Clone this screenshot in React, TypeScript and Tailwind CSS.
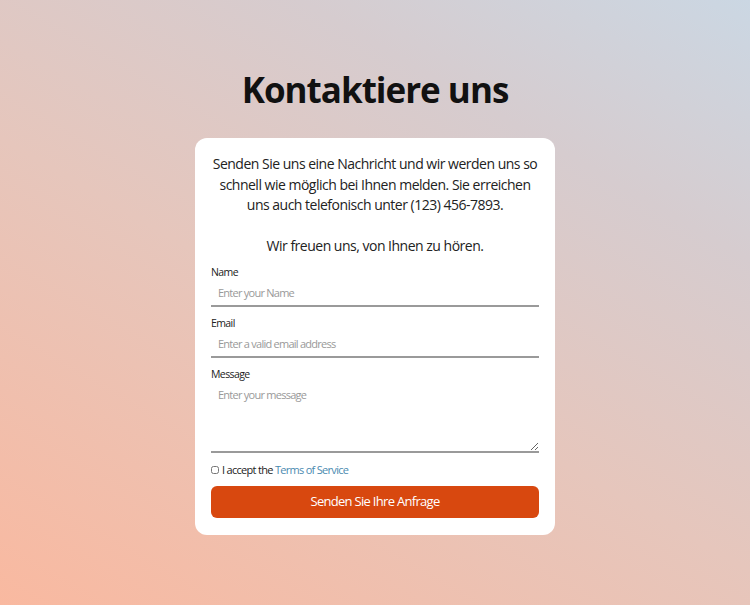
export default function App() {
  return (
    <div
      className="min-h-[605px] w-full flex flex-col items-center pt-[66px] pb-[70px] bg-[linear-gradient(30deg,#f9b9a0_0%,#e6c6bc_45%,#d6cccf_75%,#cbd7e3_100%)]"
      style={{ fontFamily: '"Open Sans", "Noto Sans", sans-serif' }}
    >
      <h1 className="text-[35px] leading-[48px] font-bold text-[#111] tracking-[-1px]">Kontaktiere uns</h1>
      <div className="mt-[24px] w-[360px] bg-white rounded-[12px] px-4 pt-[16px] pb-[17px]">
        <p className="text-[14px] leading-[20.5px] text-[#222] text-center tracking-[-0.5px]">
          Senden Sie uns eine Nachricht und wir werden uns so schnell wie möglich bei Ihnen melden. Sie erreichen uns auch telefonisch unter (123) 456-7893.
          <br />
          <br />
          Wir freuen uns, von Ihnen zu hören.
        </p>
        <form className="mt-[7px] flex flex-col" onSubmit={(e) => e.preventDefault()}>
          <label className="text-[10.5px] leading-[16px] text-[#222] tracking-[-0.6px]">Name</label>
          <input
            placeholder="Enter your Name"
            className="h-[27px] px-[7px] text-[11px] tracking-[-0.75px] border-b-2 border-[#9a9a9a] outline-none placeholder:text-[#999]"
          />
          <label className="mt-[8px] text-[10.5px] leading-[16px] text-[#222] tracking-[-0.6px]">Email</label>
          <input
            placeholder="Enter a valid email address"
            className="h-[27px] px-[7px] text-[11px] tracking-[-0.75px] border-b-2 border-[#9a9a9a] outline-none placeholder:text-[#999]"
          />
          <label className="mt-[8px] text-[10.5px] leading-[16px] text-[#222] tracking-[-0.6px]">Message</label>
          <textarea
            placeholder="Enter your message"
            className="h-[71px] px-[7px] py-[5px] text-[11px] tracking-[-0.75px] border-b-2 border-[#9a9a9a] outline-none placeholder:text-[#999]"
          />
          <div className="mt-[9px] flex items-center gap-[3px] text-[11px] leading-[16px] text-[#222] tracking-[-0.7px]">
            <input type="checkbox" className="w-[8px] h-[8px] m-0 accent-[#ccc]" />
            <span>
              I accept the <a className="text-[#4a8ab0]">Terms of Service</a>
            </span>
          </div>
          <button
            type="submit"
            className="mt-[8px] h-[32px] rounded-[6px] bg-[#d8480f] text-white text-[13px] tracking-[-0.7px]"
          >
            Senden Sie Ihre Anfrage
          </button>
        </form>
      </div>
    </div>
  );
}
